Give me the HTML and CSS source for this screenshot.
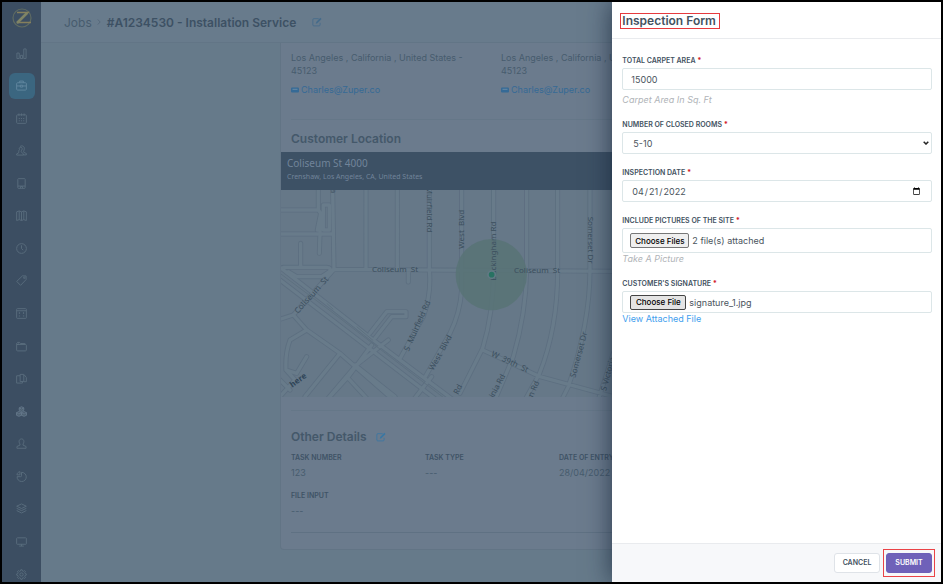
FILE: index.html
```html
<!DOCTYPE html>
<html lang="en-US">
<head>
<meta charset="utf-8">
<title>Jobs</title>
<link rel="stylesheet" href="styles.css">
</head>
<body>
<div class="app">
  <aside class="sidebar">
    <a class="logo" href="#" aria-label="Home">
      <svg width="22" height="20" viewBox="0 0 22 20" fill="none"><circle cx="11" cy="10" r="9" stroke="#5f6b62" stroke-width="1.2"/><path d="M6 4.500H17L7 14.500H20" stroke="#857f5c" stroke-width="1.500"/><path d="M16 5 6 15" stroke="#7f8466" stroke-width="2.500"/></svg>
    </a>
    <nav class="nav">
      <a href="#" aria-label="Dashboard"><svg viewBox="0 0 12 12"><path d="M1 5.500h2.500v6H1zM4.800 8h2.400v3.500H4.800zM8.500 1H11v10.500H8.500z"/></svg></a>
      <a href="#" class="active" aria-label="Jobs"><svg viewBox="0 0 12 12"><rect x=".7" y="3" width="10.600" height="8" rx="1"/><path d="M4 3V1.200h4V3M.7 6.500h4M7.300 6.500h4M4.700 5.700h2.600v2H4.700z"/></svg></a>
      <a href="#" aria-label="Calendar"><svg viewBox="0 0 12 12"><rect x=".7" y="2" width="10.600" height="9.300" rx="1"/><path d="M3.200.5v2.500M8.800.5v2.500M6 .5v2.500M3 6h1.200M5.400 6h1.200M7.800 6H9M3 8.500h1.200M5.400 8.500h1.200M7.800 8.500H9"/></svg></a>
      <a href="#" aria-label="Customers"><svg viewBox="0 0 12 12"><path d="M4.500 1.500c3-1.500 5 .5 4.500 3C8.700 6.500 8 7 8.500 8l2.800 1.300v1.500H8M3 7c0-1 .3-1.300.8-2C3 3.500 4 2.200 5.500 2.500 7 2.800 7 4.500 6.300 5.500 5.500 6.700 5.500 7 6 8l2 1.500v1.500H.7V9.700L3 8.500z"/></svg></a>
      <a href="#" aria-label="Organizations"><svg viewBox="0 0 12 12"><rect x="2" y=".7" width="8" height="10.600" rx=".6"/><path d="M5 11V9.200h2V11M2 8.800h8"/></svg></a>
      <a href="#" aria-label="Map"><svg viewBox="0 0 12 12"><path d="M.7 2 3.500 1v9.500l-2.800 1zM3.500 1 6 2v9.500l-2.500-1M6 2l2.500-1v9.500L6 11.500M8.500 1l2.800 1v9.500l-2.800-1"/></svg></a>
      <a href="#" aria-label="Timesheets"><svg viewBox="0 0 12 12"><circle cx="6" cy="6" r="5.300"/><path d="M6 2.500V6l1.800 1.800"/></svg></a>
      <a href="#" aria-label="Quotes"><svg viewBox="0 0 12 12"><path d="M7 1h4v4L5 11.300.8 7z"/><circle cx="9" cy="3" r=".8"/></svg></a>
      <a href="#" aria-label="Invoices"><svg viewBox="0 0 12 12"><rect x=".7" y=".7" width="10.600" height="10.600" rx=".8"/><path d="M.7 3h10.600M3 5.500h1.500M7.500 5.500H9M3 8.700h1.500M7.500 8.700H9M3.700 4.700v1.600M8.200 4.700v1.600"/></svg></a>
      <a href="#" aria-label="Contracts"><svg viewBox="0 0 12 12"><path d="M1 3.800h9.500a1 1 0 0 1 .8 1v5a1 1 0 0 1-1 1H1.700a1 1 0 0 1-1-1V2.500l1-1h2L5 2.700l5 .2v.9M1 3.800 3.500 3"/></svg></a>
      <a href="#" aria-label="Parts"><svg viewBox="0 0 12 12"><path d="M4.500 3H.7v8H7V9.500M4.500 1.500h4v7.800h-4zM8.500 2.500h1L11.300 5v4.500H8.500"/></svg></a>
      <a href="#" aria-label="Assets"><svg class="heavy" viewBox="0 0 12 12"><path d="M6 .8 8.500 2v2.700L6 6 3.500 4.700V2zM3.200 6 6 7.300v2.800l-2.800 1.200L.5 10.100V7.300zM8.800 6l2.700 1.300v2.800l-2.700 1.200L6 10.100V7.300zM3.500 2 6 3.200 8.500 2M.5 7.300l2.700 1.300L6 7.300l2.800 1.300 2.700-1.300"/></svg></a>
      <a href="#" aria-label="Users"><svg viewBox="0 0 12 12"><path d="M4.300 6.500C2.500 4 3.500 1 6 1s3.500 3 1.700 5.500v1.300l3.300 1.500v1.900H1V9.300l3.300-1.500z"/></svg></a>
      <a href="#" aria-label="Reports"><svg viewBox="0 0 12 12"><path d="M6 1.500a5 5 0 1 1-4.800 4.700H5a1 1 0 0 0 1-1zM4.300.7v3.500H1C1 2.500 2.500 1 4.300.7z"/></svg></a>
      <a href="#" aria-label="Catalog"><svg viewBox="0 0 12 12"><path d="m6 1 5.300 2.500L6 6 .7 3.500zM.7 5.800 6 8.300l5.300-2.500M.7 8.200 6 10.900l5.300-2.700"/></svg></a>
      <a href="#" aria-label="Display"><svg viewBox="0 0 12 12"><rect x=".7" y="2" width="10.600" height="7" rx=".6"/><path d="M6 9v2M3.500 11h5"/></svg></a>
      <a href="#" aria-label="Settings"><svg viewBox="0 0 12 12"><circle cx="6" cy="6" r="1.800"/><path d="m5.200.8-.3 1.400-1 .4-1.300-.8-1 1 .8 1.300-.4 1-1.300.3v1.300l1.400.4.4 1-.8 1.200 1 1 1.200-.8 1 .4.300 1.400h1.500l.3-1.400 1-.4 1.300.8 1-1-.8-1.300.4-1 1.300-.3V5.300L9.900 5l-.4-1 .8-1.200-1-1-1.300.8-1-.4-.3-1.400z"/></svg></a>
    </nav>
  </aside>

  <main class="main">
    <header class="topbar">
      <a class="crumb" href="#">Jobs</a>
      <svg class="chev" width="4" height="6" viewBox="0 0 4 6"><path d="m.8.5 2.400 2.500L.8 5.500"/></svg>
      <h1>#A1234530 - Installation Service</h1>
      <button class="edit" type="button" aria-label="Edit job"><svg viewBox="0 0 12 12"><path d="M8 2H2.200A1.200 1.200 0 0 0 1 3.200v6.300a1.200 1.200 0 0 0 1.200 1.200h6.300a1.200 1.200 0 0 0 1.200-1.200V7"/><path class="pen" d="m5 6 5-5 1.500 1.500-5 5L4.500 8z"/></svg></button>
    </header>

    <section class="card">
      <div class="addresses">
        <div class="address">
          <p>Los Angeles , California , United States - 45123</p>
          <a href="#"><svg width="8" height="6" viewBox="0 0 8 6"><rect y=".5" width="8" height="5" rx="1"/><path d="M1.500 2.300h5" /></svg>Charles@Zuper.co</a>
        </div>
        <div class="address">
          <p>Los Angeles , California , United States - 45123</p>
          <a href="#"><svg width="8" height="6" viewBox="0 0 8 6"><rect y=".5" width="8" height="5" rx="1"/><path d="M1.500 2.300h5" /></svg>Charles@Zuper.co</a>
        </div>
      </div>
      <h2 class="location-title">Customer Location</h2>
      <div class="map">
        <svg class="map-canvas" width="100%" height="245">
          <defs>
            <g id="roads">
              <path d="M0 90H115M0 162H158M115 30V90L122 100 112 150M122 100 118 220M62 190V262M130 75V150H148V75H130M158 30 162 270M258 0V268M352 0V268M10 262H140Q155 262 148 275L125 290H50L25 275M160 268 1000 274M162 268 40 405 0 418M385 274V306"/>
              <path d="M448 0V270Q455 340 430 410L362 532M545 0V330Q540 400 510 460L436 590M641 0V270Q640 400 608 505L540 640M740 0V270Q738 400 700 530L645 660M833 0V260Q835 440 778 582L735 660M930 0V270Q930 430 865 620L845 660M1000 520 955 660M0 262 150 378 280 480 520 660M0 300 470 660M270 460 320 395H378V410H335L285 475M40 405 80 450 180 520 340 660M80 450 30 480Q15 520 18 570L50 580 80 530M18 570 45 600 0 650M325 480 228 556 140 660M275 495 205 590 150 650M180 520 75 650M225 555 345 650M200 590 265 660M608 510 780 590 1000 650"/>
              <path d="M0 600 30 630M400 660 455 590"/>
            </g>
          </defs>
          <g transform="translate(-1 28) scale(.3333)">
            <use href="#roads" class="road-edge"/>
            <use href="#roads" class="road"/>
            <path class="rail" d="M0 280 150 392 280 492 500 660M140 370 160 388M230 440 280 482"/>
            <circle cx="634" cy="284" r="107" class="radius"/>
            <g class="map-text">
              <text x="276" y="277">Coliseum&#160; St</text>
              <text x="702" y="280">Coliseum&#160; St</text>
              <text transform="translate(54 402) rotate(-48)">Coliseum&#160; St</text>
              <text transform="translate(442 20) rotate(90)">Muirfield Rd</text>
              <text transform="translate(152 26) rotate(90)">a</text>
              <text transform="translate(551 206) rotate(-90)">West&#160; Blvd</text>
              <text transform="translate(648 302) rotate(-90)">Buckingham Rd</text>
              <text transform="translate(924 110) rotate(90)">Somerset Dr</text>
              <text transform="translate(386 515) rotate(-66)">S&#160; Muirfield Rd</text>
              <text transform="translate(460 573) rotate(-61)">West&#160; Blvd</text>
              <text transform="translate(632 527) rotate(25)">W&#160; 39th&#160; St</text>
              <text transform="translate(886 594) rotate(-75)">Somerset Dr</text>
              <text transform="translate(534 645) rotate(-62)">Rd</text>
              <text transform="translate(641 655) rotate(-62)">inia Rd</text>
              <text transform="translate(758 653) rotate(-66)">n Rd</text>
              <text transform="translate(978 634) rotate(-75)">S Victoria</text>
              <text class="here" transform="translate(37 623) rotate(-36)">here</text>
            </g>
            <circle cx="635" cy="284" r="11" class="pin"/>
          </g>
        </svg>
        <div class="map-caption">
          <strong>Coliseum St 4000</strong>
          <span>Crenshaw, Los Angeles, CA, United States</span>
        </div>
      </div>
      <div class="details">
        <h2>Other Details <button class="edit blue" type="button" aria-label="Edit details"><svg viewBox="0 0 12 12"><path d="M8 2H2.200A1.200 1.200 0 0 0 1 3.200v6.300a1.200 1.200 0 0 0 1.200 1.200h6.300a1.200 1.200 0 0 0 1.200-1.200V7"/><path class="pen" d="m5 6 5-5 1.500 1.500-5 5L4.500 8z"/></svg></button></h2>
        <dl>
          <div><dt>TASK NUMBER</dt><dd>123</dd></div>
          <div><dt>TASK TYPE</dt><dd>---</dd></div>
          <div><dt>DATE OF ENTRY</dt><dd>28/04/2022</dd></div>
          <div><dt>FILE INPUT</dt><dd>---</dd></div>
        </dl>
      </div>
    </section>
  </main>

  <form class="drawer">
    <header class="drawer-head"><h2>Inspection Form</h2></header>
    <div class="fields">
      <div class="field">
        <label for="area">TOTAL CARPET AREA <b>*</b></label>
        <input class="control" id="area" type="text" value="15000">
        <p class="hint spaced">Carpet Area In Sq. Ft</p>
      </div>
      <div class="field">
        <label for="rooms">NUMBER OF CLOSED ROOMS <b>*</b></label>
        <div class="select">
          <select class="control" id="rooms"><option>5-10</option></select>
          <svg width="6" height="4" viewBox="0 0 6 4"><path d="m.7.700 2.300 2.300L5.300.700"/></svg>
        </div>
      </div>
      <div class="field">
        <label for="date">INSPECTION DATE <b>*</b></label>
        <input class="control" id="date" type="date" value="2022-04-21">
      </div>
      <div class="field">
        <label for="pictures">INCLUDE PICTURES OF THE SITE <b>*</b></label>
        <div class="control file tall"><input class="multi" id="pictures" type="file" multiple><span>2 file(s) attached</span></div>
        <p class="hint">Take A Picture</p>
      </div>
      <div class="field">
        <label for="signature">CUSTOMER'S SIGNATURE <b>*</b></label>
        <div class="control file focused"><input id="signature" type="file"><span>signature_1.jpg</span></div>
        <a class="view" href="#">View Attached File</a>
      </div>
    </div>
    <footer class="drawer-foot">
      <button class="btn" type="button">CANCEL</button>
      <div class="marked"><button class="btn primary" type="submit">SUBMIT</button></div>
    </footer>
  </form>
</div>
</body>
</html>
```
FILE: styles.css
```css
* { box-sizing: border-box; }
body {
  margin: 0;
  font-family: Inter, "Liberation Sans", sans-serif;
  font-size: 9px;
  line-height: 13px;
  color: #475b6e;
}
h1, h2, p, dl, dd { margin: 0; }
a { color: inherit; text-decoration: none; }
button, input, select { font-family: inherit; }

.app {
  position: relative;
  display: flex;
  height: 100vh;
  border: 2px solid #000;
  overflow: hidden;
  background: #667a8a;
}

/* Sidebar */
.sidebar {
  display: flex;
  flex-direction: column;
  flex: none;
  width: 39px;
  background: #3c4e62;
}
.logo { display: flex; justify-content: center; padding: 6px 0 17px; }
.nav {
  display: flex;
  flex: 1;
  flex-direction: column;
  align-items: center;
  justify-content: space-between;
}
.nav a {
  display: flex;
  align-items: center;
  justify-content: center;
  width: 26px;
  height: 16px;
}
.nav .active {
  height: 26px;
  margin: -5px 0;
  border-radius: 6px;
  background: #3b6680;
}
.nav svg { width: 11px; height: 11px; fill: none; stroke: #5a6d7e; stroke-width: 1; }
.nav .active svg { stroke: #6288a0; }
.nav .heavy { fill: #4f6273; stroke: #64778a; }

/* Page */
.main { flex: 1; min-width: 0; }
.topbar {
  display: flex;
  align-items: center;
  height: 41px;
  padding-left: 23px;
  border-bottom: 1px solid #627586;
  background: #687b8c;
}
.crumb { font-size: 12px; }
.chev { margin: 0 6px 0 5px; fill: none; stroke: #56697b; }
h1 { font-size: 12px; font-weight: 600; color: #3d5164; }
.edit { display: inline-flex; margin-left: 16px; padding: 0; border: 0; background: none; color: #456b8b; }
.edit svg { width: 10px; height: 10px; fill: none; stroke: currentColor; }
.edit .pen { fill: currentColor; stroke: none; }
.blue { margin-left: 5px; color: #3a77a3; }

.card {
  margin-left: 239px;
  border: 1px solid #627485;
  border-top: 0;
  border-radius: 0 0 4px 4px;
  background: #6b7b8d;
}
.addresses {
  display: grid;
  grid-template-columns: 200px 200px;
  gap: 10px;
  height: 77px;
  margin-left: 10px;
  padding-top: 8px;
  border-bottom: 1px solid #657788;
}
.address p { width: 180px; }
.address a { display: flex; align-items: center; gap: 2px; margin-top: 6px; color: #356a96; }
.address rect { fill: #356a96; }
.address path { stroke: #6b8ba6; }
.card h2 { font-size: 12px; line-height: 16px; font-weight: 600; color: #44586a; }
.card .location-title { padding: 11px 10px 5px; }

.map { position: relative; height: 245px; overflow: hidden; background: #667888; }
.map-canvas { display: block; }
.road-edge, .road { fill: none; stroke-linecap: round; stroke-linejoin: round; }
.road-edge { stroke: #5d6f80; stroke-width: 15px; }
.road { stroke: #687b8a; stroke-width: 10px; }
.rail { fill: none; stroke: #5d7080; stroke-width: 3px; }
.radius { fill: #587376; fill-opacity: .85; }
.pin { fill: #287262; stroke: #617a84; stroke-width: 5px; }
.map-text { font-family: "Noto Sans", sans-serif; font-size: 24px; fill: #3b4e5d; }
.map-text .here { font-weight: 700; fill: #2f4558; }
.map-caption {
  position: absolute;
  inset: 0 0 auto;
  display: flex;
  flex-direction: column;
  height: 38px;
  padding: 4px 6px;
  background: #3d5165;
  font-family: "Noto Sans", sans-serif;
  font-size: 7px;
  line-height: 14px;
  color: #71849a;
}
.map-caption strong { font-size: 10px; font-weight: 400; }

.details { margin: 13px 0 0 10px; border-top: 1px solid #657788; }
.card .details h2 { display: flex; align-items: center; gap: 4px; padding: 18px 0 8px; }
dl {
  display: grid;
  grid-template-columns: repeat(3, 124px);
  gap: 12px 10px;
  height: 80px;
  align-content: start;
  border-bottom: 1px solid #5f7183;
  margin-bottom: 16px;
}
dt { font-size: 7px; line-height: 10px; font-weight: 600; color: #3f5366; white-space: nowrap; }
dd { margin-top: 3px; }

/* Form drawer */
.drawer {
  position: absolute;
  inset: 0 0 0 auto;
  display: flex;
  flex-direction: column;
  width: 35%;
  background: #fff;
  box-shadow: 0 0 24px rgba(20, 35, 55, .75);
  color: #4c5a66;
}
.drawer-head { display: flex; align-items: flex-start; height: 37px; padding: 11px 8px; border-bottom: 1px solid #e9ebee; }
.drawer-head h2 {
  padding: 0 3px 0 1px;
  border: 1px solid #e63a3e;
  font-size: 12px;
  line-height: 14px;
  font-weight: 600;
  color: #43525f;
}
.fields { display: flex; flex: 1; flex-direction: column; gap: 15px; padding: 18px 9px 0 10px; }
.field label { display: block; margin-bottom: 3px; font-size: 7px; line-height: 8px; font-weight: 600; color: #43525f; }
.field b { color: #d3262f; }
.control {
  display: block;
  width: 100%;
  height: 22px;
  padding: 0 8px;
  border: 1px solid #dce6e8;
  border-radius: 2px;
  background: #fff;
  font-size: 9px;
  color: #4a545d;
}
.select { position: relative; }
.select select { appearance: none; padding: 0 10px; }
.select svg { position: absolute; top: 9px; right: 3px; fill: none; stroke: #222; stroke-width: 1.5; pointer-events: none; }
.file { display: flex; align-items: center; gap: 3px; padding: 0 7px; }
.tall { height: 25px; }
.file input { width: 56px; height: 15px; overflow: hidden; font-size: 8px; }
.file .multi { width: 59px; }
.file input::file-selector-button {
  width: 100%;
  height: 15px;
  margin: 0 8px 0 0;
  padding: 0;
  border: 1px solid #777;
  border-radius: 2px;
  background: #efefef;
  font: 500 8px/12px Inter, sans-serif;
  color: #000;
}
.focused input::file-selector-button { border-color: #444; background: #e4e4e4; }
.hint { line-height: 12px; font-style: italic; color: #b0b4b8; }
.spaced { margin-top: 4px; }
.view { display: block; line-height: 12px; color: #3fa0ee; }
.drawer-foot {
  display: flex;
  align-items: center;
  justify-content: flex-end;
  gap: 3px;
  height: 39px;
  padding: 0 6px 1px 0;
  border-top: 1px solid #e9ebee;
  background: #f7f8fa;
}
.btn {
  display: block;
  width: 46px;
  height: 20px;
  padding: 0;
  border: 1px solid #dfe3e8;
  border-radius: 3px;
  background: #fff;
  font-size: 7px;
  font-weight: 600;
  color: #43525f;
}
.primary { border-color: #6d5fb8; background: #6f61b9; color: #fff; }
.marked { padding: 3px 2px; border: 1px solid #ea4347; }
```
